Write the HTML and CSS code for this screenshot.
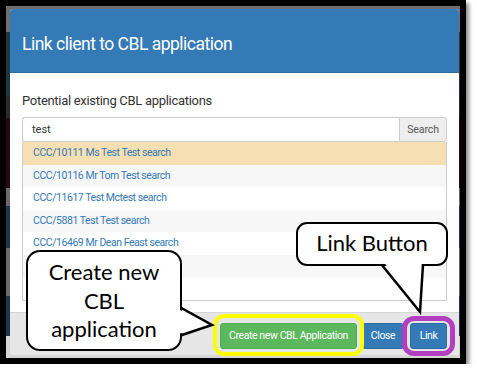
FILE: index.html
```html
<!DOCTYPE html>
<html>
<head>
<meta charset="utf-8">
<link rel="stylesheet" href="styles.css">
</head>
<body>
<div class="frame">
  <div class="backdrop">
    <div class="modal">
      <div class="modal-header">
        <h4 class="modal-title">Link client to CBL application</h4>
      </div>
      <div class="modal-body">
        <label class="field-label">Potential existing CBL applications</label>
        <div class="input-group">
          <div class="input">test</div>
          <div class="addon">Search</div>
        </div>
        <ul class="results">
          <li class="row selected"><a>CCC/10111 Ms Test Test search</a></li>
          <li class="row alt"><a>CCC/10116 Mr Tom Test search</a></li>
          <li class="row"><a>CCC/11617 Test Mctest search</a></li>
          <li class="row alt"><a>CCC/5881 Test Test search</a></li>
          <li class="row"><a>CCC/16469 Mr Dean Feast search</a></li>
          <li class="row alt"></li>
          <li class="row"></li>
        </ul>
      </div>
      <div class="modal-footer">
        <button class="btn btn-green">Create new CBL Application</button>
        <button class="btn btn-blue btn-close">Close</button>
        <button class="btn btn-blue btn-link">Link</button>
      </div>
    </div>
  </div>

  <div class="ring ring-yellow"></div>
  <div class="ring ring-purple"></div>

  <div class="callout callout-link">Link Button</div>
  <div class="callout callout-create">Create new<br>CBL<br>application</div>

  <svg class="tails" width="454" height="352" viewBox="0 0 454 352">
    <polygon points="377,255 414,305 416,255" fill="#fff"/>
    <polyline points="375.5,258.5 414,306 417,258.5" fill="none" stroke="#000" stroke-width="2.5" stroke-linejoin="miter"/>
    <polygon points="172,303 205,319 172,328" fill="#fff"/>
    <polyline points="174.5,301.5 206,319 174.5,329.5" fill="none" stroke="#000" stroke-width="2.5" stroke-linejoin="miter"/>
  </svg>
</div>
</body>
</html>
```
FILE: styles.css
```css
* { box-sizing: border-box; }
html, body { margin: 0; padding: 0; background: #fff; }
body { font-family: Roboto, "Liberation Sans", sans-serif; }

.frame {
  position: relative;
  width: 466px;
  height: 364px;
  border: 6px solid #000;
  box-shadow: 3px 3px 4px rgba(0,0,0,0.45);
}

.backdrop {
  width: 100%;
  height: 100%;
  padding: 3px 1px 0 4px;
  background:
    linear-gradient(to bottom,
      #6e6e6e 0, #6e6e6e 26px,
      #1c3a3e 26px, #1c3a3e 90px,
      #2a2a2a 90px, #2a2a2a 112px,
      #2c0812 112px, #2c0812 182px,
      #6a6a6a 182px, #6a6a6a 200px,
      #1c3553 200px, #1c3553 242px,
      #6a6a6a 242px, #6a6a6a 290px,
      #1c3553 290px, #1c3553 330px,
      #d6d6d6 330px, #d6d6d6 352px);
}

.modal {
  width: 449px;
  height: 346px;
  background: #fff;
  border-radius: 4px;
  overflow: hidden;
  display: flex;
  flex-direction: column;
}

.modal-header {
  height: 64px;
  flex: none;
  background: #337ab7;
  display: flex;
  align-items: center;
  padding: 6px 12px 0;
  border-bottom: 1px solid #2e6da4;
}
.modal-title {
  margin: 0;
  color: #fff;
  font-weight: 400;
  font-size: 17.5px;
  letter-spacing: -0.5px;
}

.modal-body {
  flex: 1;
  padding: 20px 12px 0;
  display: flex;
  flex-direction: column;
}

.field-label {
  display: block;
  font-size: 13px;
  letter-spacing: -0.3px;
  line-height: 16px;
  color: #333;
  margin-bottom: 8px;
}

.input-group {
  display: flex;
  height: 25px;
}
.input {
  flex: 1;
  border: 1px solid #ccc;
  border-right: none;
  border-radius: 3px 0 0 3px;
  padding: 0 9px;
  font-size: 11px;
  line-height: 23px;
  color: #333;
  background: #fff;
}
.addon {
  width: 48px;
  border: 1px solid #ccc;
  border-radius: 0 3px 3px 0;
  background: #eee;
  color: #555;
  font-size: 10.5px;
  letter-spacing: -0.1px;
  line-height: 23px;
  text-align: center;
}

.results {
  list-style: none;
  margin: 0;
  padding: 0;
  border: 1px solid #ccc;
  border-top: none;
}
.row {
  height: 22.6px;
  padding: 0 10px;
  font-size: 10.5px;
  letter-spacing: -0.45px;
  line-height: 22.6px;
  background: #fff;
}
.row.alt { background: #f7f7f7; }
.row.selected { background: #f5dfb3; }
.row a { color: #337ab7; }

.modal-footer {
  flex: none;
  height: 43px;
  border-top: 1px solid #d5d5d5;
  background: #e6e6e6;
  display: flex;
  justify-content: flex-end;
  align-items: flex-start;
  padding: 10px 12px 0;
  gap: 5px;
}
.btn {
  height: 26px;
  border: 1px solid transparent;
  border-radius: 3px;
  font-family: Roboto, "Liberation Sans", sans-serif;
  font-size: 10.5px;
  letter-spacing: -0.4px;
  color: #fff;
  padding: 0;
  line-height: 24px;
  text-align: center;
}
.btn-green { width: 137px; background: #5cb85c; border-color: #4cae4c; }
.btn-blue { background: #337ab7; border-color: #2e6da4; }
.btn-close { width: 42px; }
.btn-link { width: 37px; margin-left: 1px; }

.ring {
  position: absolute;
  border-radius: 11px;
  pointer-events: none;
}
.ring-yellow {
  left: 207px;
  top: 308px;
  width: 151px;
  height: 42px;
  border: 4.5px solid #ffff00;
}
.ring-purple {
  left: 396px;
  top: 310px;
  width: 53px;
  height: 40px;
  border: 5px solid #b23ec2;
  border-radius: 12px;
}

.callout {
  position: absolute;
  background: #fff;
  border: 2.5px solid #000;
  border-radius: 11px;
  font-family: Lato, "Open Sans", sans-serif;
  color: #000;
  text-align: center;
}
.callout-link {
  left: 290px;
  top: 216px;
  width: 152px;
  height: 44px;
  font-size: 22px;
  line-height: 38px;
}
.callout-create {
  left: 20px;
  top: 244px;
  width: 156px;
  height: 101px;
  font-size: 22px;
  line-height: 28.5px;
  padding-top: 6px;
  border-radius: 14px;
}

.tails {
  position: absolute;
  left: 0;
  top: 0;
  pointer-events: none;
}
```
